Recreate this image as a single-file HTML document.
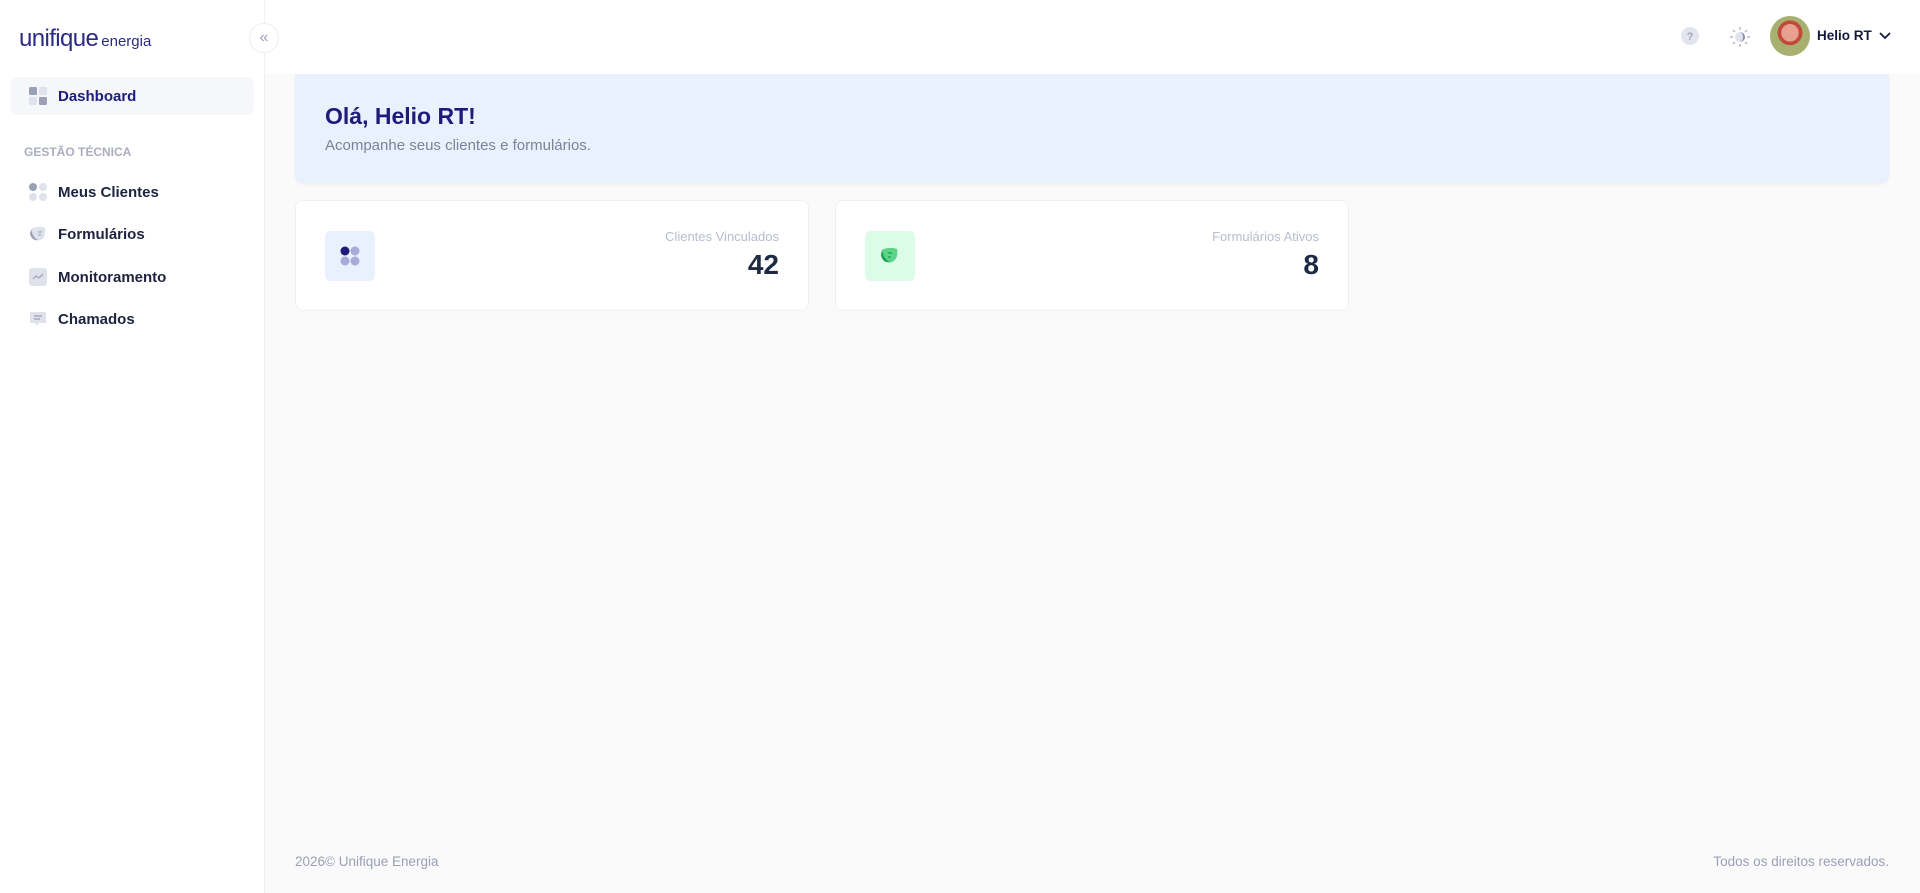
<!DOCTYPE html>
<html><head><meta charset="utf-8"><style>
*{box-sizing:border-box;margin:0;padding:0}
body{width:1920px;height:893px;overflow:hidden;background:#fafafa;font-family:"Liberation Sans",sans-serif;position:relative}
.side{position:absolute;left:0;top:0;width:265px;height:893px;background:#fff;border-right:1px solid #eef0f4;z-index:2}
.hdr{position:absolute;left:265px;top:0;right:0;height:74px;background:#fff;z-index:1}
.logo{position:absolute;left:19px;top:25px;color:#2b2a86;white-space:nowrap}
.logo b{font-weight:400;font-size:24px;letter-spacing:-0.6px}
.logo span{font-size:15px;margin-left:3px}
.coll{position:absolute;left:249px;top:23px;width:30px;height:30px;border-radius:50%;border:1px solid #eceef3;background:#fff;color:#99a1b7;font-size:16px;text-align:center;line-height:27px;z-index:5}
.item{position:absolute;left:11px;width:243px;height:38px;display:flex;align-items:center;font-size:15px;font-weight:700;color:#1e2340}
.item .ic{width:18px;height:18px;margin-left:18px;margin-right:11px;position:relative}
.act{background:#f5f7fb;border-radius:8px;color:#1e1b7a}
.sec{position:absolute;left:24px;top:145px;font-size:12px;font-weight:700;color:#a9adbd}
.banner{position:absolute;left:295px;top:74px;width:1594px;height:109px;background:#e8f1fd;border-radius:0 0 8px 8px;box-shadow:0 2px 4px rgba(0,0,0,.04)}
.banner h1{position:absolute;left:30px;top:29px;font-size:23px;color:#1e1b7a;font-weight:700}
.banner p{position:absolute;left:30px;top:63px;font-size:15px;color:#7e8299}
.card{position:absolute;top:200px;width:514px;height:111px;background:#fff;border:1px solid #eef0f4;border-radius:8px}
.card .box{position:absolute;left:29px;top:30px;width:50px;height:50px;border-radius:6px}
.card .lb{position:absolute;right:29px;top:28px;font-size:13px;color:#b8bcd0}
.card .v{position:absolute;right:29px;top:48px;font-size:28px;font-weight:700;color:#1e2a44}
.foot{position:absolute;top:854px;font-size:13.5px;color:#9a9fb5}
</style></head><body>
<div class="side">
<div class="logo"><b>unifique</b><span>energia</span></div>
<div class="item act" style="top:77px"><div class="ic"><svg width="18" height="18"><rect x="0" y="0" width="8" height="8" rx="1.5" fill="#9aa0b6"/><rect x="10" y="0" width="8" height="8" rx="1.5" fill="#dfe2ea"/><rect x="0" y="10" width="8" height="8" rx="1.5" fill="#dfe2ea"/><rect x="10" y="10" width="8" height="8" rx="1.5" fill="#9aa0b6"/></svg></div>Dashboard</div>
<div class="sec">GESTÃO TÉCNICA</div>
<div class="item" style="top:173px"><div class="ic"><svg width="18" height="18"><circle cx="4" cy="4" r="4" fill="#9aa0b6"/><circle cx="14" cy="4" r="4" fill="#dfe2ea"/><circle cx="4" cy="14" r="4" fill="#dfe2ea"/><circle cx="14" cy="14" r="4" fill="#dfe2ea"/></svg></div>Meus Clientes</div>
<div class="item" style="top:215px"><div class="ic"><svg width="18" height="18"><path d="M2 4c3-2 10-3 14-1 1 4 0 10-4 12-4 1-8 0-10-4z" fill="#dfe2ea"/><path d="M2 4c1 5 3 9 7 11-4 1-7-2-8-6z" fill="#9aa0b6"/><path d="M9 7h4M9 10h3" stroke="#9aa0b6" stroke-width="1"/></svg></div>Formulários</div>
<div class="item" style="top:258px"><div class="ic"><svg width="18" height="18"><rect x="0" y="0" width="18" height="18" rx="3" fill="#dfe2ea"/><path d="M4 11l3-3 3 2 4-4" stroke="#9aa0b6" stroke-width="1.2" fill="none"/></svg></div>Monitoramento</div>
<div class="item" style="top:300px"><div class="ic"><svg width="18" height="18"><path d="M1 2h16v11H10l-2 3-2-3H1z" fill="#dfe2ea"/><path d="M5 6h8M5 9h6" stroke="#9aa0b6" stroke-width="1.2"/></svg></div>Chamados</div>
</div>
<div class="coll">«</div>
<div class="hdr">
<svg style="position:absolute;left:1416px;top:27px" width="18" height="18"><circle cx="9" cy="9" r="9" fill="#e3e5ee"/><text x="9" y="13" font-size="11" text-anchor="middle" fill="#a1a5b7" font-family="Liberation Sans" font-weight="700">?</text></svg>
<svg style="position:absolute;left:1464px;top:26px" width="22" height="22"><g stroke="#b5b9cc" stroke-width="1.5"><path d="M11 1v3M11 18v3M1 11h3M18 11h3M4 4l2 2M16 16l2 2M4 18l2-2M16 6l2-2"/></g><circle cx="11" cy="11" r="5" fill="#dfe2ea"/><path d="M11 6a5 5 0 0 1 0 10a3 5 0 0 0 0-10z" fill="#8a90a8"/></svg>
<div style="position:absolute;left:1505px;top:16px;width:40px;height:40px;border-radius:50%;background:radial-gradient(circle at 50% 42%,#e8a090 0 28%,#c24a3a 29% 40%,#a8b070 41% 75%,#6a8a4a 76%);"></div>
<div style="position:absolute;left:1552px;top:28px;font-size:13.5px;font-weight:700;color:#141a3a">Helio RT</div>
<svg style="position:absolute;left:1613px;top:31px" width="14" height="10"><path d="M2 2l5 5 5-5" stroke="#141a3a" stroke-width="1.8" fill="none"/></svg>
</div>
<div class="banner"><h1>Olá, Helio RT!</h1><p>Acompanhe seus clientes e formulários.</p></div>
<div class="card" style="left:295px"><div class="box" style="background:#e8f1fd"><svg width="50" height="50"><circle cx="20" cy="20" r="4.5" fill="#1e1b7a"/><circle cx="30" cy="20" r="4.5" fill="#a6acd8"/><circle cx="20" cy="30" r="4.5" fill="#a6acd8"/><circle cx="30" cy="30" r="4.5" fill="#a6acd8"/></svg></div><div class="lb">Clientes Vinculados</div><div class="v">42</div></div>
<div class="card" style="left:835px"><div class="box" style="background:#dcfce7"><svg width="50" height="50"><path d="M17 19c3-2 10-3 15-1 1 5 0 11-5 13-4 1-8 0-10-4z" fill="#5dd38a"/><path d="M17 19c1 5 3 10 8 12-5 1-8-2-9-7z" fill="#16a34a"/><path d="M23 22h4M23 26h3" stroke="#16a34a" stroke-width="1.2"/></svg></div><div class="lb">Formulários Ativos</div><div class="v">8</div></div>
<div class="foot" style="left:295px">2026© Unifique Energia</div>
<div class="foot" style="right:31px">Todos os direitos reservados.</div>
</body></html>
